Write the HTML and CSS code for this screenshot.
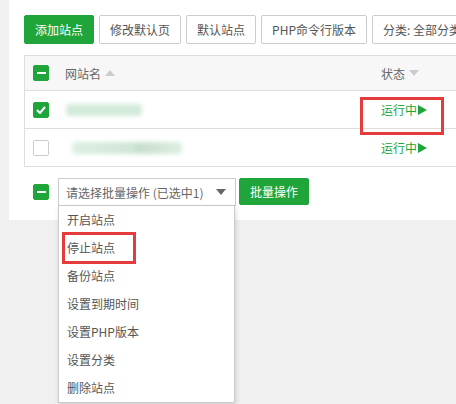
FILE: index.html
```html
<!DOCTYPE html>
<html lang="zh-CN">

<head>
  <meta charset="UTF-8">
  <title>网站管理</title>
  <link rel="stylesheet" href="styles.css">
</head>

<body>
  <div class="panel">
    <div class="toolbar">
      <button class="btn btn-green">添加站点</button>
      <button class="btn">修改默认页</button>
      <button class="btn">默认站点</button>
      <button class="btn">PHP命令行版本</button>
      <button class="btn">分类: 全部分类</button>
    </div>

    <div class="site-table">
      <div class="row row-head">
        <div class="cell-check"><span class="chk chk-on"><i class="minus"></i></span></div>
        <div class="cell-name">网站名 <span class="tri tri-up"></span></div>
        <div class="cell-status">状态 <span class="tri tri-down"></span></div>
      </div>
      <div class="row">
        <div class="cell-check">
          <span class="chk chk-on">
            <svg width="10" height="8" viewBox="0 0 10 8"><path d="M1 4 L4 7 L9 1" fill="none" stroke="#fff" stroke-width="2"/></svg>
          </span>
        </div>
        <div class="cell-name"><span class="blur blur-a"></span></div>
        <div class="cell-status">
          <span class="running">运行中<span class="play"></span></span>
          <span class="mark mark-status"></span>
        </div>
      </div>
      <div class="row">
        <div class="cell-check"><span class="chk"></span></div>
        <div class="cell-name"><span class="blur blur-b"></span></div>
        <div class="cell-status"><span class="running">运行中<span class="play"></span></span></div>
      </div>
    </div>

    <div class="batch-bar">
      <span class="chk chk-on"><i class="minus"></i></span>
      <div class="select-wrap">
        <div class="select">请选择批量操作 (已选中1) <span class="caret"></span></div>
        <ul class="dropdown">
          <li>开启站点</li>
          <li>停止站点<span class="mark mark-item"></span></li>
          <li>备份站点</li>
          <li>设置到期时间</li>
          <li>设置PHP版本</li>
          <li>设置分类</li>
          <li>删除站点</li>
        </ul>
      </div>
      <button class="btn btn-green btn-batch">批量操作</button>
    </div>
  </div>
</body>

</html>
```

FILE: styles.css
```css
* {
  box-sizing: border-box;
  margin: 0;
  padding: 0;
  font-family: 'Noto Sans CJK SC', 'Liberation Sans', sans-serif;
}

html,
body {
  overflow: hidden;
}

body {
  height: 404px;
  background: #f0f0f0;
  font-size: 12px;
  color: #666;
}

.panel {
  margin-left: 9px;
  width: 520px;
  height: 220px;
  background: #fff;
  padding: 15px 0 0 15px;
}

.toolbar {
  display: flex;
  gap: 5px;
}

.btn {
  height: 29px;
  padding: 0 10px;
  border: 1px solid #ccc;
  border-radius: 2px;
  background: #fff;
  color: #555;
  font-size: 12px;
  white-space: nowrap;
}

.btn-green {
  background: #20a53a;
  border-color: #20a53a;
  color: #fff;
}

/* table */
.site-table {
  margin-top: 11px;
  width: 480px;
  border: 1px solid #ddd;
}

.row {
  display: flex;
  align-items: center;
  height: 38px;
  border-top: 1px solid #ddd;
}

.row-head {
  height: 34px;
  border-top: none;
  background: #f7f7f7;
}

.cell-check {
  width: 33px;
  padding-left: 8px;
  display: flex;
}

.cell-name {
  flex: 1;
  padding-left: 7px;
  display: flex;
  align-items: center;
  gap: 4px;
}

.cell-status {
  width: 122px;
  position: relative;
  display: flex;
  align-items: center;
  gap: 4px;
}

.chk {
  width: 16px;
  height: 16px;
  border: 1px solid #ccc;
  border-radius: 2px;
  background: #fff;
  display: flex;
  align-items: center;
  justify-content: center;
}

.chk-on {
  background: #20a53a;
  border-color: #20a53a;
}

.minus {
  width: 9px;
  height: 2px;
  background: #fff;
}

.tri {
  width: 0;
  height: 0;
  border-left: 5px solid transparent;
  border-right: 5px solid transparent;
}

.tri-up {
  border-bottom: 6px solid #ccc;
}

.tri-down {
  border-top: 6px solid #ccc;
}

.blur {
  height: 12px;
  border-radius: 4px;
  background: #d3ebda;
  filter: blur(2px);
}

.blur-a {
  width: 76px;
  margin-left: 1px;
}

.blur-b {
  width: 110px;
  margin-left: 7px;
  background: linear-gradient(90deg, #dcefe2, #d0e6d7 55%, #c7ddcc 60%, #dcefe2);
}

.running {
  color: #20a53a;
  display: flex;
  align-items: center;
  gap: 1px;
}

.play {
  width: 0;
  height: 0;
  border-top: 5px solid transparent;
  border-bottom: 5px solid transparent;
  border-left: 9px solid #20a53a;
}

.mark {
  position: absolute;
  border: 3px solid #e53b3b;
}

.mark-status {
  left: -21px;
  top: -4px;
  width: 84px;
  height: 38px;
}

/* batch bar */
.batch-bar {
  display: flex;
  align-items: center;
  margin-top: 11px;
  padding-left: 9px;
}

.select-wrap {
  position: relative;
  margin-left: 9px;
}

.select {
  width: 178px;
  height: 28px;
  border: 1px solid #ccc;
  padding-left: 7px;
  display: flex;
  align-items: center;
  color: #666;
}

.caret {
  margin-left: auto;
  margin-right: 9px;
  border-left: 5px solid transparent;
  border-right: 5px solid transparent;
  border-top: 6px solid #666;
}

.dropdown {
  position: absolute;
  left: 0;
  top: 28px;
  width: 177px;
  list-style: none;
  background: #fff;
  border: 1px solid #ccc;
  border-top: none;
  box-shadow: 1px 2px 5px rgba(0, 0, 0, 0.15);
}

.dropdown li {
  position: relative;
  height: 28px;
  line-height: 28px;
  padding-left: 8px;
  color: #555;
}

.mark-item {
  left: 3px;
  top: -2px;
  width: 74px;
  height: 32px;
}

.btn-batch {
  height: 27px;
  margin-left: 3px;
  align-self: flex-start;
}
```
